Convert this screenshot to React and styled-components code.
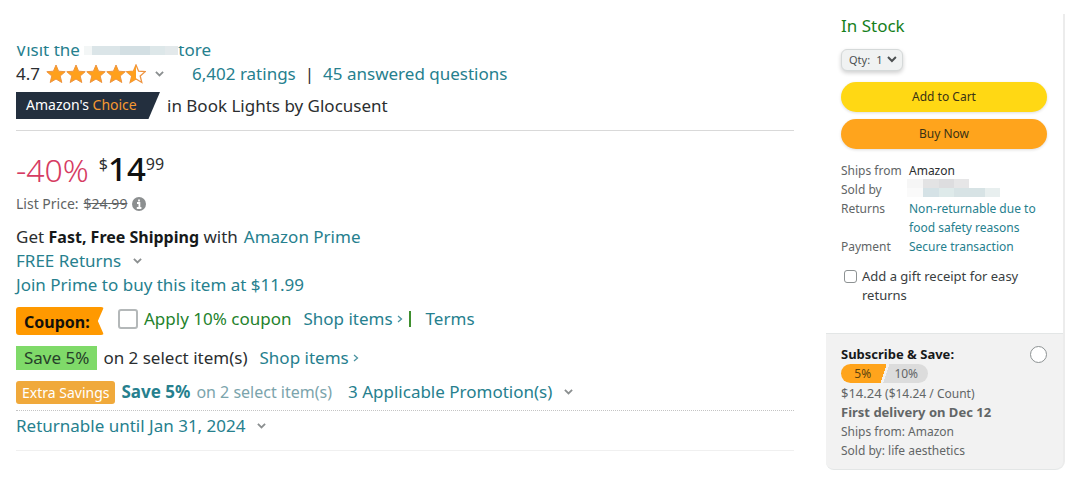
import React from "react";
import styled, { createGlobalStyle } from "styled-components";

const Global = createGlobalStyle`
  * { box-sizing: border-box; }
  body { margin: 0; background: #fff; color: #2b2e30; font: 17px/24px "Noto Sans", sans-serif; }
  button, select, input { font: inherit; color: inherit; margin: 0; }
`;

const Page = styled.main`
  display: flex;
  align-items: flex-start;
  gap: 32px;
  padding: 14px 15px 8px 16px;
`;
const Product = styled.section`
  flex: 1;
  min-width: 0;
  padding-top: 32px;
`;
const Row = styled.div`
  display: flex;
  align-items: ${(p) => p.$align || "center"};
  white-space: nowrap;
  gap: ${(p) => p.$gap || 0}px;
  min-height: 24px;
  margin-top: ${(p) => p.$top || 0}px;
`;
const Link = styled.a`
  display: inline-flex;
  align-items: center;
  color: #26808e;
  text-decoration: none;
  gap: ${(p) => p.$gap || 0}px;
`;
const StoreLine = styled.div`
  display: flex;
  align-items: flex-end;
  height: 16px;
  overflow: hidden;
`;
const Mosaic = styled.span`
  display: flex;
  height: ${(p) => p.$h}px;
`;
const Cell = styled.span`
  flex: none;
  width: ${(p) => p.$w}px;
  background: ${(p) => p.$c};
`;
const Stars = styled.svg`
  display: block;
  margin: 0 9px 0 6px;
`;
const Choice = styled.span`
  display: block;
  width: 144px;
  height: 27px;
  padding-left: 10px;
  color: #fff;
  background: #232f3e;
  font-size: 14px;
  line-height: 25px;
  clip-path: polygon(0 0, 100% 0, 92% 100%, 0 100%);
  em { font-style: normal; color: #f69931; }
`;
const Rule = styled.hr`
  border: 0;
  border-top: 1px ${(p) => (p.$dotted ? "dotted" : "solid")} ${(p) => p.$color};
  margin: ${(p) => p.$top}px 0 0;
`;
const PriceRow = styled.div`
  display: flex;
  align-items: flex-start;
  margin-top: 19px;
  height: 40px;
  line-height: 40px;
`;
const Discount = styled.span`
  color: #d63b62;
  font-size: 32px;
  font-weight: 300;
  margin-right: 10px;
`;
const Whole = styled.span`
  color: #0f1111;
  font-size: 33px;
  font-weight: 500;
  line-height: 38px;
`;
const PriceMark = styled.span`
  color: #2b2e30;
  font-size: 16px;
  line-height: 29px;
`;
const ListPrice = styled(Row)`
  color: #5f6364;
  font-size: 14px;
`;
const Check = styled.input`
  appearance: none;
  flex: none;
  width: ${(p) => p.$size}px;
  height: ${(p) => p.$size}px;
  border: ${(p) => p.$border || 1}px solid ${(p) => p.$color || "#8d9293"};
  border-radius: ${(p) => p.$round || "3px"};
  background: #fff;
`;
const Coupon = styled.span`
  display: block;
  width: 88px;
  height: 28px;
  padding-left: 8px;
  border-radius: 3px;
  background: #ff9900;
  color: #14110a;
  font-size: 16px;
  font-weight: 700;
  line-height: 30px;
  clip-path: polygon(0 0, 100% 0, 93% 50%, 100% 100%, 0 100%);
`;
const CouponLabel = styled.label`
  display: flex;
  align-items: center;
  gap: 6px;
  margin-left: 14px;
  color: #24822c;
  height: 22px;
`;
const Divider = styled.span`
  width: 2px;
  height: 16px;
  background: #3f8f2f;
`;
const SaveTag = styled.span`
  padding: 0 8px;
  background: #7fda69;
  color: #26402a;
`;
const ExtraTag = styled.span`
  padding: 0 6px;
  border-radius: 3px;
  background: #f0a93b;
  color: #fff;
  font-size: 14px;
  line-height: 23px;
`;
const Muted = styled.span`
  color: #7ba4ac;
  font-size: 16px;
`;
const Shipping = styled.b`
  color: #16191a;
  font-size: 16px;
`;
const BuyBox = styled.aside`
  flex: none;
  width: 239px;
  border-right: 2px solid #ececec;
  border-radius: 0 0 9px 9px;
`;
const BuyTop = styled.div`
  padding: 0 16px 28px 15px;
`;
const Stock = styled.div`
  color: #16801c;
  font-size: 17px;
  line-height: 24px;
`;
const Qty = styled.label`
  display: flex;
  align-items: center;
  width: 62px;
  height: 22px;
  margin: 11px 0;
  padding: 0 5px 0 7px;
  border: 1px solid #d5d9d9;
  border-radius: 6px;
  background: #f0f2f2;
  box-shadow: 0 2px 4px rgba(15, 17, 17, 0.2);
  color: #4c5051;
  font-size: 11px;
  select {
    appearance: none;
    border: 0;
    padding: 0;
    width: 8px;
    margin: 0 4px 0 6px;
    background: transparent;
  }
`;
const Action = styled.button`
  display: block;
  width: 100%;
  height: 30px;
  border: 0;
  border-radius: 15px;
  margin-bottom: 7px;
  background: ${(p) => p.$bg};
  box-shadow: 0 1px 3px rgba(15, 17, 17, 0.14);
  color: #3a3214;
  font-size: 12px;
`;
const Facts = styled.dl`
  display: grid;
  grid-template-columns: 68px 1fr;
  margin: 12px -8px 0 0;
  font-size: 12px;
  line-height: 19px;
  dt { color: #616566; white-space: nowrap; }
  dd { margin: 0; white-space: nowrap; }
`;
const Seller = styled.div`
  margin: -1px 0 0 -2px;
`;
const Gift = styled.label`
  display: flex;
  align-items: flex-start;
  gap: 5px;
  margin: 11px 0 0 3px;
  font-size: 13px;
  line-height: 19px;
  color: #3a3e3f;
  input { margin-top: 3px; }
`;
const Subscribe = styled.div`
  padding: 10px 16px 9px 15px;
  border: 1px solid #e3e6e6;
  border-width: 1px 0;
  border-radius: 0 0 8px 8px;
  background: #f2f2f2;
  color: #626667;
  font-size: 12px;
  line-height: 19px;
`;
const SubscribeHead = styled.label`
  display: flex;
  justify-content: space-between;
  align-items: center;
  height: 20px;
  color: #16191a;
  font-size: 13px;
  font-weight: 700;
`;
const Tiers = styled.div`
  display: flex;
  width: 87px;
  height: 19px;
  margin-bottom: 1px;
  border-radius: 10px;
  overflow: hidden;
  background: linear-gradient(108deg, #ffa41c 0 49%, #f2f2f2 49% 52%, #dcdcdc 52%);
  span { flex: 1; text-align: center; }
  span:first-child { color: #5c430f; }
`;
const Line = styled.div`
  font-size: ${(p) => p.$size || 12}px;
  font-weight: ${(p) => (p.$bold ? 700 : 400)};
  white-space: nowrap;
  small { font-size: 12px; }
`;

const Chevron = ({ size = 9, color = "#8b8f90", width = 2 }) => (
  <svg width={size} height={size} viewBox="0 0 10 10" fill="none" stroke={color} strokeWidth={width} aria-hidden="true">
    <path d="M1 2l4 4 4-4" />
  </svg>
);
const Arrow = () => (
  <svg width="6" height="8" viewBox="0 0 6 8" fill="none" stroke="#4b93a0" strokeWidth="1.3" aria-hidden="true">
    <path d="M1 1l3.5 3L1 7" />
  </svg>
);
const STAR = "M10 1l2.6 6.2 6.6.5-5 4.3 1.6 6.5L10 15l-5.8 3.5L5.8 12l-5-4.3 6.6-.5z";
const Rating = () => (
  <Stars width="100" height="20" viewBox="0 0 100 20" role="img" aria-label="4.7 out of 5 stars">
    {[0, 1, 2, 3].map((i) => (
      <path key={i} d={STAR} transform={`translate(${i * 20} 0)`} fill="#ffa01c" stroke="#ee9440" strokeWidth="1" />
    ))}
    <g transform="translate(80 0)">
      <path d={STAR} fill="#fff" stroke="#ee9440" strokeWidth="1.3" />
      <path d="M10 1v14l-5.8 3.5L5.8 12l-5-4.3 6.6-.5z" fill="#ffa01c" />
    </g>
  </Stars>
);
const Info = () => (
  <svg width="14" height="14" viewBox="0 0 14 14" aria-hidden="true">
    <circle cx="7" cy="7" r="7" fill="#8c8f90" />
    <path d="M7 2.4v2M5 6h2.4v4.6M4.8 11h4.6" stroke="#fff" strokeWidth="1.8" fill="none" />
  </svg>
);

export default function App() {
  return (
    <>
      <Global />
      <Page>
        <Product>
          <StoreLine>
            <Link href="#store">
              Visit the&nbsp;
              <Mosaic $h={10}>
                <Cell $w={8} $c="#f3f6f6" />
                <Cell $w={28} $c="#dbe5e8" />
                <Cell $w={30} $c="#d3dfe3" />
                <Cell $w={15} $c="#dde7e9" />
                <Cell $w={13} $c="#e3e9eb" />
              </Mosaic>
              tore
            </Link>
          </StoreLine>
          <Row>
            <span>4.7</span>
            <Rating />
            <Row $gap={28}>
              <Chevron />
              <Row $gap={9}>
                <Link href="#ratings">6,402 ratings</Link>
                <span>|</span>
                <Link href="#questions">45 answered questions</Link>
              </Row>
            </Row>
          </Row>
          <Row $top={6} $gap={7}>
            <Choice>Amazon's <em>Choice</em></Choice>
            <span>in Book Lights by Glocusent</span>
          </Row>
          <Rule $top={11} $color="#d9d9d9" />
          <PriceRow>
            <Discount>-40%</Discount>
            <PriceMark>$</PriceMark>
            <Whole>14</Whole>
            <PriceMark>99</PriceMark>
          </PriceRow>
          <ListPrice $top={2} $gap={5}>
            <span>List Price:</span>
            <s>$24.99</s>
            <Info />
          </ListPrice>
          <Row $top={9} $gap={6}>
            <span>Get <Shipping>Fast, Free Shipping</Shipping> with</span>
            <Link href="#prime">Amazon Prime</Link>
          </Row>
          <Row>
            <Link href="#returns" $gap={12}>FREE Returns <Chevron /></Link>
          </Row>
          <Row>
            <Link href="#join">Join Prime to buy this item at $11.99</Link>
          </Row>
          <Row $top={10} $align="flex-start">
            <Coupon>Coupon:</Coupon>
            <Row $gap={12}>
              <CouponLabel>
                <Check type="checkbox" $size={20} $border={2} $color="#b4b8b9" />
                Apply 10% coupon
              </CouponLabel>
              <Row $gap={15}>
                <Row $gap={6}>
                  <Link href="#shop-coupon" $gap={4}>Shop items <Arrow /></Link>
                  <Divider />
                </Row>
                <Link href="#terms">Terms</Link>
              </Row>
            </Row>
          </Row>
          <Row $top={11} $gap={12}>
            <Row $gap={6}>
              <SaveTag>Save 5%</SaveTag>
              <span>on 2 select item(s)</span>
            </Row>
            <Link href="#shop-save" $gap={4}>Shop items <Arrow /></Link>
          </Row>
          <Row $top={10} $gap={16}>
            <Row $gap={6}>
              <ExtraTag>Extra Savings</ExtraTag>
              <Link href="#savings" $gap={6}><b>Save 5%</b> <Muted>on 2 select item(s)</Muted></Link>
            </Row>
            <Link href="#promotions" $gap={12}>3 Applicable Promotion(s) <Chevron /></Link>
          </Row>
          <Rule $top={6} $color="#c4c4c4" $dotted />
          <Row $top={3}>
            <Link href="#returnable" $gap={12}>Returnable until Jan 31, 2024 <Chevron /></Link>
          </Row>
          <Rule $top={12} $color="#f0f0f0" />
        </Product>

        <BuyBox>
          <BuyTop>
            <Stock>In Stock</Stock>
            <Qty>
              Qty:
              <select defaultValue="1"><option>1</option></select>
              <Chevron size={12} color="#4c5051" width={2} />
            </Qty>
            <Action $bg="#ffd814">Add to Cart</Action>
            <Action $bg="#ffa41c">Buy Now</Action>
            <Facts>
              <dt>Ships from</dt>
              <dd>Amazon</dd>
              <dt>Sold by</dt>
              <dd>
                <Seller>
                  <Mosaic $h={9}>
                    <Cell $w={16} $c="#f6f6f6" />
                    <Cell $w={16} $c="#e3e3e4" />
                    <Cell $w={15} $c="#dddddf" />
                    <Cell $w={15} $c="#e6e6e7" />
                  </Mosaic>
                  <Mosaic $h={9}>
                    <Cell $w={16} $c="#fafafa" />
                    <Cell $w={16} $c="#d5e2e6" />
                    <Cell $w={15} $c="#deeaea" />
                    <Cell $w={31} $c="#d7e3e5" />
                    <Cell $w={15} $c="#e8efef" />
                  </Mosaic>
                </Seller>
              </dd>
              <dt>Returns</dt>
              <dd><Link href="#policy">Non-returnable due to<br />food safety reasons</Link></dd>
              <dt>Payment</dt>
              <dd><Link href="#secure">Secure transaction</Link></dd>
            </Facts>
            <Gift>
              <Check type="checkbox" $size={13} />
              <span>Add a gift receipt for easy returns</span>
            </Gift>
          </BuyTop>
          <Subscribe>
            <SubscribeHead>
              Subscribe &amp; Save:
              <Check type="radio" $size={17} $round="50%" />
            </SubscribeHead>
            <Tiers><span>5%</span><span>10%</span></Tiers>
            <Line $size={13}>$14.24 <small>($14.24 / Count)</small></Line>
            <Line $size={13} $bold>First delivery on Dec 12</Line>
            <Line>Ships from: Amazon</Line>
            <Line>Sold by: life aesthetics</Line>
          </Subscribe>
        </BuyBox>
      </Page>
    </>
  );
}
